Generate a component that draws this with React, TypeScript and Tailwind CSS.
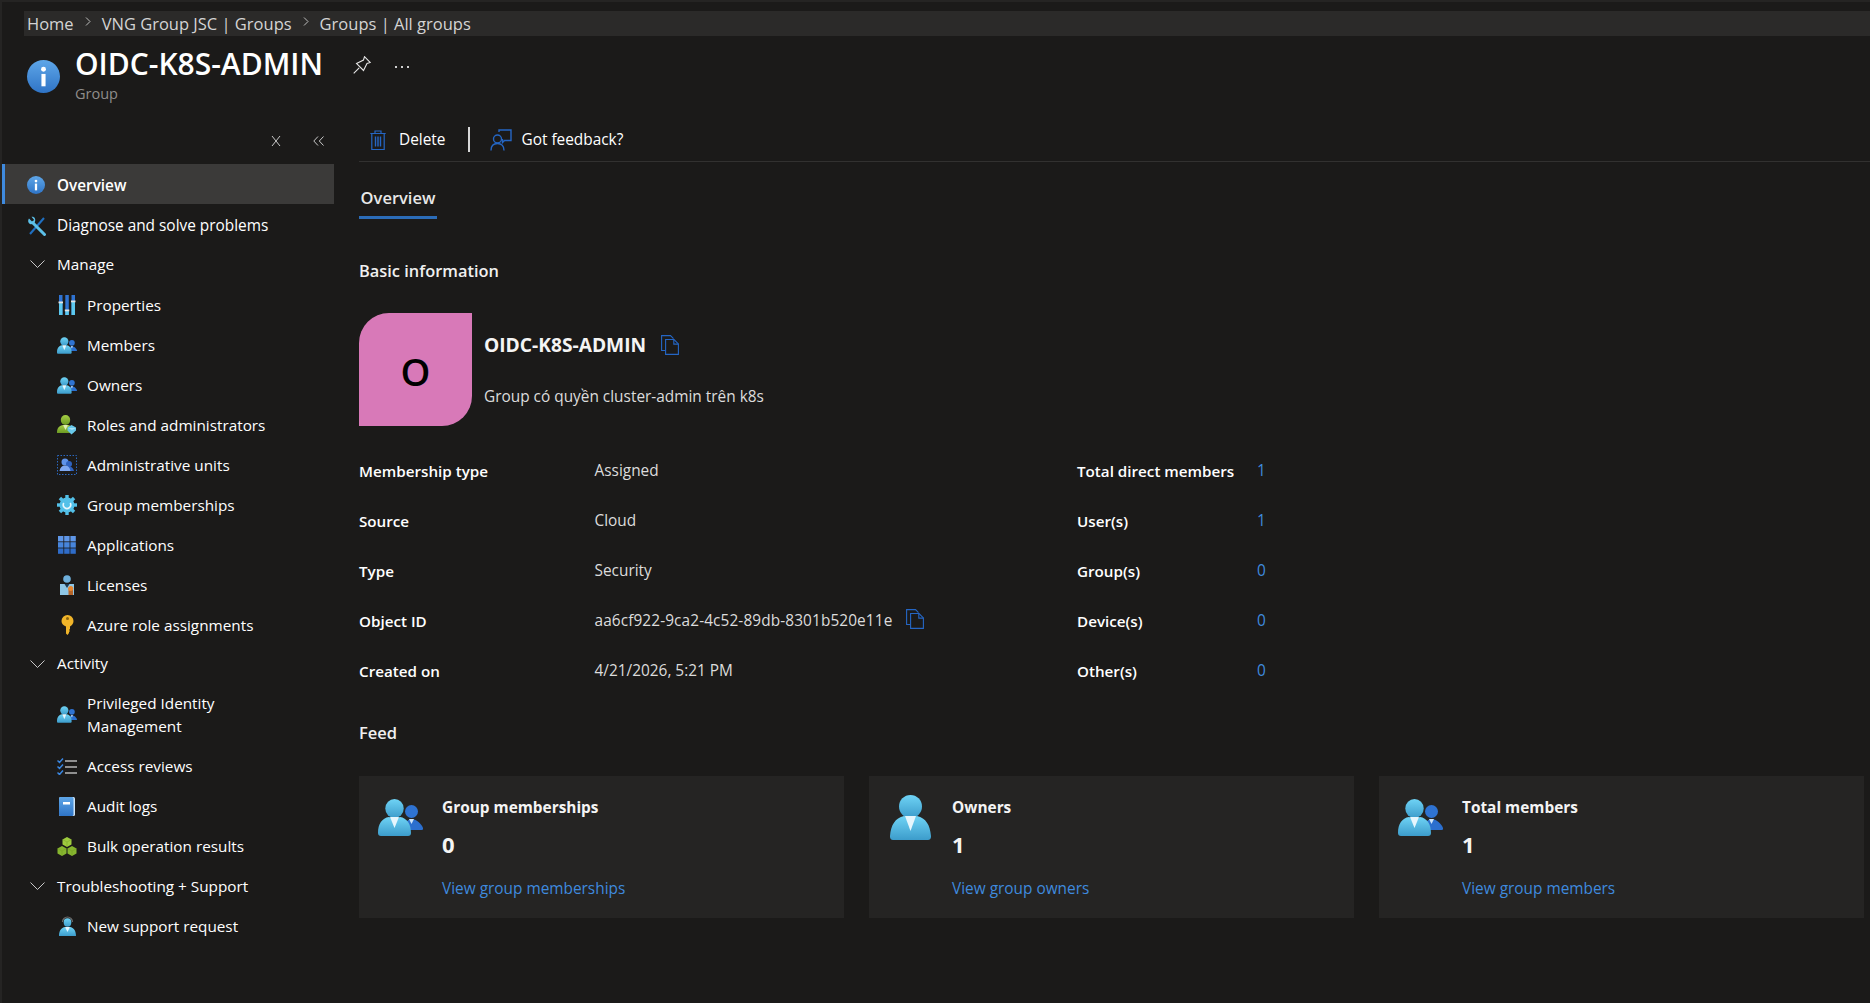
import React from "react";

const Grad = () => (
  <svg width="0" height="0" className="absolute">
    <defs>
      <linearGradient id="pb" x1="0" y1="0" x2="0" y2="1"><stop offset="0" stopColor="#6fd3f5" /><stop offset="1" stopColor="#3c9ccb" /></linearGradient>
      <linearGradient id="ib" x1="0" y1="0" x2="0" y2="1"><stop offset="0" stopColor="#5ea6e8" /><stop offset="1" stopColor="#2f74c6" /></linearGradient>
      <linearGradient id="gr" x1="0" y1="0" x2="0" y2="1"><stop offset="0" stopColor="#a6cf45" /><stop offset="1" stopColor="#6c9a23" /></linearGradient>
    </defs>
  </svg>
);

const InfoIcon = ({ s }: { s: number }) => (
  <svg width={s} height={s} viewBox="0 0 32 32" className="shrink-0">
    <circle cx="16" cy="16" r="16" fill="url(#ib)" />
    <circle cx="16" cy="9" r="2.4" fill="#fff" />
    <rect x="14" y="13.5" width="4" height="12" fill="#fff" />
  </svg>
);

const People = ({ w = 20, h = 17 }: { w?: number; h?: number }) => (
  <svg width={w} height={h} viewBox="0 0 45 37" className="shrink-0">
    <ellipse cx="33.5" cy="12.5" rx="6.5" ry="6.5" fill="#2f73d2" />
    <path d="M26 31c0-6 3-11 7.5-11S44 25 45 29c.4 1.6-.5 2-2 2z" fill="#2b6fce" />
    <path d="M31 20l2.5 5 2.5-5z" fill="#cfe6fb" />
    <ellipse cx="16.5" cy="9.5" rx="9.2" ry="9.5" fill="url(#pb)" />
    <path d="M0 34c0-9 4-15 11-16l5.5 2 5.5-2c7 1 11 7 11 16 0 2-1 3-3 3H3c-2 0-3-1-3-3z" fill="url(#pb)" />
    <path d="M12 18h9l-4.5 11z" fill="#e6f6fd" />
  </svg>
);

const Person = () => (
  <svg width="41" height="45" viewBox="0 0 41 45" className="shrink-0">
    <ellipse cx="20.5" cy="11.5" rx="11.5" ry="11.5" fill="url(#pb)" />
    <path d="M0 41C1 30 5 23 14 21l6.500 1.500L27 21c9 2 13 9 14 20 .2 2.500-1 4-3 4H3c-2 0-3.200-1.500-3-4z" fill="url(#pb)" />
    <path d="M15 21h11l-5.500 15z" fill="#e6f6fd" />
  </svg>
);

const Sliders = () => (
  <svg width="18" height="20" viewBox="0 0 18 20">
    <rect x="1" y="0" width="3.500" height="20" fill="#2f73d2" /><rect x="1" y="8" width="3.500" height="12" fill="#5cc8ee" /><rect x="0.500" y="6.500" width="4.500" height="1.800" fill="#e4e4e4" />
    <rect x="7.300" y="0" width="3.500" height="20" fill="#2f73d2" /><rect x="7.300" y="16" width="3.500" height="4" fill="#5cc8ee" /><rect x="6.800" y="14.500" width="4.500" height="1.800" fill="#e4e4e4" />
    <rect x="13.500" y="0" width="3.500" height="20" fill="#2f73d2" /><rect x="13.500" y="7" width="3.500" height="13" fill="#5cc8ee" /><rect x="13" y="5.500" width="4.500" height="1.800" fill="#e4e4e4" />
  </svg>
);

const RolesIcon = () => (
  <svg width="20" height="20" viewBox="0 0 20 20">
    <ellipse cx="8.500" cy="5" rx="4.700" ry="5" fill="url(#gr)" />
    <path d="M0 18c0-5 2-7 5.500-8l3 1 3-1c3 1 5 3 5 8z" fill="url(#gr)" />
    <path d="M6 10h5l-2.500 5z" fill="#dfeeb5" />
    <path d="M10.500 12.500l4-2.500 4.500 2.500v3l-4.500 4-4-4z" fill="#68c8ea" />
    <path d="M11 13h8l-4 2z" fill="#a6e2f6" />
  </svg>
);

const AdminUnits = () => (
  <svg width="20" height="20" viewBox="0 0 20 20">
    <rect x="0.500" y="0.500" width="19" height="19" fill="none" stroke="#2b67bf" strokeDasharray="1.500 1.500" />
    <circle cx="8" cy="7" r="3.500" fill="#5f93e8" />
    <circle cx="12" cy="9" r="3" fill="#2f62bf" />
    <path d="M10 11c4 0 6 1.500 7 5H10z" fill="#2f62bf" />
    <path d="M2.500 16c.5-3.500 2.500-5.500 5.500-5.500s5 2 5.500 5.500z" fill="#7fa8f0" />
  </svg>
);

const GearIcon = () => (
  <svg width="20" height="20" viewBox="0 0 20 20">
    <g fill="#53c0e8">
      <circle cx="10" cy="10" r="7.500" />
      {[0, 45, 90, 135, 180, 225, 270, 315].map((a) => (
        <rect key={a} x="8.300" y="0" width="3.400" height="4" transform={`rotate(${a} 10 10)`} />
      ))}
    </g>
    <path d="M6.800 8a3.700 3.700 0 1 0 6.400 0" fill="none" stroke="#e8f7fd" strokeWidth="1.600" />
  </svg>
);

const AppsIcon = () => (
  <svg width="18" height="18" viewBox="0 0 18 18">
    {[0, 6.200, 12.400].map((y, r) =>
      [0, 6.200, 12.400].map((x) => (
        <rect key={`${x}-${y}`} x={x} y={y} width="5.400" height="5.400" fill={["#5f97e8", "#4785dc", "#2f6cc8"][r]} />
      ))
    )}
  </svg>
);

const LicenseIcon = () => (
  <svg width="16" height="20" viewBox="0 0 16 20">
    <circle cx="8" cy="4" r="3.800" fill="#6fb0dc" />
    <path d="M1 9h14v11H1z" fill="#8ec6e6" />
    <path d="M5.500 9h5L8 13z" fill="#1e3a52" />
    <rect x="9.500" y="13" width="4.500" height="7" fill="#b5652a" />
    <circle cx="11.700" cy="13.500" r="2.500" fill="#e8872f" />
  </svg>
);

const KeyIcon = () => (
  <svg width="13" height="20" viewBox="0 0 13 20">
    <path d="M6.500 0a6 6 0 0 1 6 6c0 2.500-1.500 4.500-3.500 5.500V14l-1 1 1 1-1 1v1l-1.500 2-1.500-1.500V11.500C2 10.500.5 8.500.5 6a6 6 0 0 1 6-6z" fill="#f0b429" />
    <circle cx="6.500" cy="3.500" r="1.500" fill="#8a6510" />
  </svg>
);

const ChecklistIcon = () => (
  <svg width="20" height="17" viewBox="0 0 20 17" fill="none">
    <path d="M0.500 2.500l2 2 3.500-4M0.500 8.500l2 2 3.500-4M0.500 14.500l2 2 3.500-4" stroke="#3a86e0" strokeWidth="1.500" />
    <path d="M8 3h12M8 9h12M8 15h12" stroke="#8f8f8f" strokeWidth="2" />
  </svg>
);

const BookIcon = () => (
  <svg width="16" height="19" viewBox="0 0 16 19">
    <rect x="0" y="0" width="16" height="19" rx="1.500" fill="#cfe4f6" />
    <rect x="0" y="0" width="14.500" height="19" rx="1.500" fill="url(#ib)" />
    <rect x="4" y="5" width="7" height="2.500" fill="#fff" />
  </svg>
);

const CubesIcon = () => (
  <svg width="20" height="19" viewBox="0 0 20 19">
    <path d="M10 0l4.500 2.500v5L10 10 5.500 7.500v-5z" fill="#9ecb3e" />
    <path d="M5 9l4.500 2.500v5L5 19 .5 16.500v-5z" fill="#86b52f" />
    <path d="M15 9l4.500 2.500v5L15 19l-4.500-2.500v-5z" fill="#86b52f" />
    <path d="M10 5l4.500-2.500M10 5L5.500 2.500M10 5v5M5 14l4.500-2.500M5 14L.5 11.500M5 14v5M15 14l4.500-2.500M15 14l-4.500-2.500M15 14v5" stroke="#6c9520" strokeWidth=".4" fill="none" />
  </svg>
);

const SupportIcon = () => (
  <svg width="17" height="20" viewBox="0 0 17 20">
    <path d="M3.500 6a5 5 0 0 1 10 0" fill="none" stroke="#6b6b6b" strokeWidth="1.200" />
    <ellipse cx="8.500" cy="6.500" rx="3.800" ry="4.200" fill="url(#pb)" />
    <path d="M0 20c0-5 2-8 5.500-9l3 1 3-1c3.500 1 5.500 4 5.500 9z" fill="url(#pb)" />
    <path d="M6 11h5l-2.500 5z" fill="#e6f6fd" />
  </svg>
);

const WrenchIcon = () => (
  <svg width="20" height="20" viewBox="0 0 20 20" fill="none">
    <path d="M3 18L17 2" stroke="#1f6fc0" strokeWidth="2" />
    <path d="M6 7l11.500 11.500" stroke="#5cc0e8" strokeWidth="3" strokeLinecap="round" />
    <path d="M2 2.500l3 3L7.200 4 4.500.8C7 0 9 2.500 8 5.500L7 8 3.500 8.200C1 7.500 .5 4.500 2 2.500z" fill="#5cc0e8" />
  </svg>
);

const CopyIcon = () => (
  <svg width="18" height="20" viewBox="0 0 18 20" fill="none" stroke="#2566c4" strokeWidth="1.100" className="shrink-0">
    <path d="M4.500 15.500H.6V.6h8.900l3 3" />
    <path d="M4.600 4.500h8.400l4.400 4.400v10.500H4.600z" />
    <path d="M12.800 4.500v4.600h4.600" />
  </svg>
);

const Chevron = () => (
  <svg width="15" height="8" viewBox="0 0 15 8" fill="none" stroke="#c8c8c8" strokeWidth="1"><path d="M.5.500l7 7 7-7" /></svg>
);

const Crumb = () => (
  <svg width="6" height="9" viewBox="0 0 6 9" fill="none" stroke="#bdbdbd" strokeWidth="1" className="mb-[6px]"><path d="M1 .5l4 4-4 4" /></svg>
);

type Item = { label: React.ReactNode; icon: React.ReactNode; h?: string };

const NavItem = ({ label, icon, h = "h-10" }: Item) => (
  <div className={`flex items-center ${h} pl-[55px]`}>
    <span className="w-[20px] flex justify-center shrink-0">{icon}</span>
    <span className="ml-[10px] text-[15.300px] leading-[23px] text-white">{label}</span>
  </div>
);

const Section = ({ label, h, mb }: { label: string; h: string; mb: string }) => (
  <div className={`flex items-center ${h} ${mb} pl-[28px] pt-[2px]`}>
    <span className="w-[15px] flex justify-center"><Chevron /></span>
    <span className="ml-[12px] text-[15.300px] text-white">{label}</span>
  </div>
);

const Card = ({ icon, title, n, link, iconBox }: { icon: React.ReactNode; title: string; n: string; link: string; iconBox: string }) => (
  <div className="flex-1 h-[142px] bg-[#252423] flex">
    <div className={`w-[83px] shrink-0 ${iconBox}`}>{icon}</div>
    <div className="pt-[22px]">
      <div className="h-[20px] leading-[20px] text-[15.400px] font-bold text-[#f4f4f4]">{title}</div>
      <div className="mt-[11px] h-[30px] leading-[30px] text-[22px] font-bold text-[#f4f4f4]">{n}</div>
      <div className="mt-[20px] h-[20px] leading-[20px] text-[15.400px] text-[#3f8ade]">{link}</div>
    </div>
  </div>
);

const InfoRow = ({ a, b, c, d }: { a: string; b: React.ReactNode; c: string; d: string }) => (
  <div className="flex items-center h-[50px] text-[15.400px]">
    <span className="w-[235.500px] text-[15.200px] font-semibold text-white">{a}</span>
    <span className="w-[482.500px] flex items-center text-[#dcdcdc]">{b}</span>
    <span className="w-[180px] text-[15.200px] font-semibold text-white">{c}</span>
    <span className="text-[#3f8ade]">{d}</span>
  </div>
);

export default function App() {
  return (
    <div className="h-[1003px] w-[1870px] overflow-hidden bg-[#1b1a19] border-l-2 border-t-2 border-[#252423] font-['Open_Sans','Noto_Sans',sans-serif]">
      <Grad />
      <div className="pt-[9px] pl-[22px]">
        <div className="h-[25px] bg-[#2b2a29] flex items-center gap-[11px] pl-[3px] pt-[2px] text-[16.500px] text-[#d4d4d4]">
          <span>Home</span><Crumb /><span>VNG Group JSC | Groups</span><Crumb /><span>Groups | All groups</span>
        </div>
      </div>
      <div className="h-[84px] flex pl-[25px]">
        <div className="pt-[24px]"><InfoIcon s={33} /></div>
        <div className="ml-[15px] pt-[9px]">
          <div className="text-[30px] leading-[38px] font-semibold text-white">OIDC-K8S-ADMIN</div>
          <div className="text-[14.500px] leading-[20px] mt-px text-[#8f8d8b]">Group</div>
        </div>
        <div className="ml-[30px] pt-[20px]">
          <svg width="18" height="18" viewBox="0 0 18 18" fill="none" stroke="#e6e6e6" strokeWidth="1.100">
            <path d="M.7 17.300l5.500-5.500M3.500 7.500l7-3.500 1-3.300 5.800 5.800-3.300 1-3.500 7z" />
          </svg>
        </div>
        <div className="ml-[24px] pt-[30px] flex gap-[4px]">
          <span className="w-[2px] h-[2px] bg-[#d0d0d0]" /><span className="w-[2px] h-[2px] bg-[#d0d0d0]" /><span className="w-[2px] h-[2px] bg-[#d0d0d0]" />
        </div>
      </div>
      <div className="flex">
        <aside className="w-[332px] shrink-0">
          <div className="h-[44px] flex items-center justify-end pr-[10px] pb-[2px] gap-[32px]">
            <svg width="10" height="12" viewBox="0 0 10 12" fill="none" stroke="#c8c8c8"><path d="M1 1l8 10M9 1L1 11" /></svg>
            <svg width="11" height="10" viewBox="0 0 11 10" fill="none" stroke="#c8c8c8"><path d="M5 .5L.8 5 5 9.500M10.500.5L6.300 5l4.200 4.500" /></svg>
          </div>
          <div className="h-[40px] bg-[#3b3a39] border-l-[3px] border-[#3f8ade] flex items-center pl-[22px] pt-[2px]">
            <InfoIcon s={18} />
            <span className="ml-[12px] text-[15.300px] font-semibold text-white">Overview</span>
          </div>
          <div className="mt-px h-10 flex items-center pl-[25px] pt-[1px]">
            <span className="w-[20px]"><WrenchIcon /></span>
            <span className="ml-[10px] text-[15.400px] text-white">Diagnose and solve problems</span>
          </div>
          <Section label="Manage" h="h-[36px]" mb="mb-[4px]" />
          <NavItem label="Properties" icon={<Sliders />} />
          <NavItem label="Members" icon={<People />} />
          <NavItem label="Owners" icon={<People />} />
          <NavItem label="Roles and administrators" icon={<RolesIcon />} />
          <NavItem label="Administrative units" icon={<AdminUnits />} />
          <NavItem label="Group memberships" icon={<GearIcon />} />
          <NavItem label="Applications" icon={<AppsIcon />} />
          <NavItem label="Licenses" icon={<LicenseIcon />} />
          <NavItem label="Azure role assignments" icon={<KeyIcon />} />
          <Section label="Activity" h="h-[35px]" mb="mb-[3px]" />
          <NavItem h="h-[63px]" label={<>Privileged Identity<br />Management</>} icon={<People />} />
          <NavItem label="Access reviews" icon={<ChecklistIcon />} />
          <NavItem label="Audit logs" icon={<BookIcon />} />
          <NavItem label="Bulk operation results" icon={<CubesIcon />} />
          <Section label="Troubleshooting + Support" h="h-[38px]" mb="mb-[2px]" />
          <NavItem label="New support request" icon={<SupportIcon />} />
        </aside>
        <main className="ml-[25px] flex-1 min-w-0">
          <div className="h-[42px] border-b border-[#323130] flex items-center pb-[2px]">
            <span className="ml-[11px]">
              <svg width="16" height="20" viewBox="0 0 16 20" fill="none" stroke="#2566c4" strokeWidth="1.200" className="block">
                <path d="M.3 3.500h15.400M5 3.500V1h6v2.500M1.800 3.500v16h12.400v-16" />
                <path d="M5.500 6.500v10M8 6.500v10M10.500 6.500v10" strokeWidth="1.400" />
              </svg>
            </span>
            <span className="ml-[13px] text-[15.400px] text-white">Delete</span>
            <span className="ml-[23px] w-[2px] h-[25px] bg-[#d8d8d8]" />
            <span className="ml-[20px]">
              <svg width="22" height="22" viewBox="0 0 22 22" fill="none" stroke="#2566c4" strokeWidth="1.400" className="block">
                <path d="M9 3V1h12v10.500h-6.500l-2 2V10" />
                <circle cx="7.500" cy="10" r="4" />
                <path d="M1 21.500c0-4.500 2.500-7 6.500-7s6.500 2.500 6.500 7" />
              </svg>
            </span>
            <span className="ml-[9px] text-[15.400px] text-white">Got feedback?</span>
          </div>
          <div className="mt-[13px] w-[78px] h-[44px] border-b-[3px] border-[#2b6cb8] flex justify-center">
            <span className="h-[26px] leading-[26px] mt-[10px] text-[16.500px] font-semibold text-[#e8e8e8]">Overview</span>
          </div>
          <div className="mt-[40px] h-[24px] leading-[24px] text-[16.400px] font-semibold text-[#f0f0f0]">Basic information</div>
          <div className="mt-[30px] flex">
            <div className="w-[113px] h-[113px] bg-[#d879b8] rounded-tl-[30px] rounded-br-[30px] flex items-center justify-center text-[38px] font-semibold text-black pt-[4px]">O</div>
            <div className="ml-[12px]">
              <div className="mt-[20px] h-[24px] flex items-center text-[19.200px] font-bold text-[#f4f4f4]">
                OIDC-K8S-ADMIN<span className="ml-[15px]"><CopyIcon /></span>
              </div>
              <div className="mt-[28px] h-[24px] leading-[24px] text-[15.400px] text-[#dcdcdc]">Group có quyền cluster-admin trên k8s</div>
            </div>
          </div>
          <div className="mt-[20px]">
            <InfoRow a="Membership type" b="Assigned" c="Total direct members" d="1" />
            <InfoRow a="Source" b="Cloud" c="User(s)" d="1" />
            <InfoRow a="Type" b="Security" c="Group(s)" d="0" />
            <InfoRow a="Object ID" b={<><span className="tracking-[0.1px]">aa6cf922-9ca2-4c52-89db-8301b520e11e</span><span className="ml-[14px] mb-[4px]"><CopyIcon /></span></>} c="Device(s)" d="0" />
            <InfoRow a="Created on" b="4/21/2026, 5:21 PM" c="Other(s)" d="0" />
          </div>
          <div className="mt-[25px] h-[24px] leading-[24px] text-[16.500px] font-semibold text-[#f0f0f0]">Feed</div>
          <div className="mt-[31px] flex gap-[25px] pr-[6px]">
            <Card icon={<People w={45} h={37} />} iconBox="pl-[19px] pt-[23px]" title="Group memberships" n="0" link="View group memberships" />
            <Card icon={<Person />} iconBox="pl-[21px] pt-[19px]" title="Owners" n="1" link="View group owners" />
            <Card icon={<People w={45} h={37} />} iconBox="pl-[19px] pt-[23px]" title="Total members" n="1" link="View group members" />
          </div>
        </main>
      </div>
    </div>
  );
}
